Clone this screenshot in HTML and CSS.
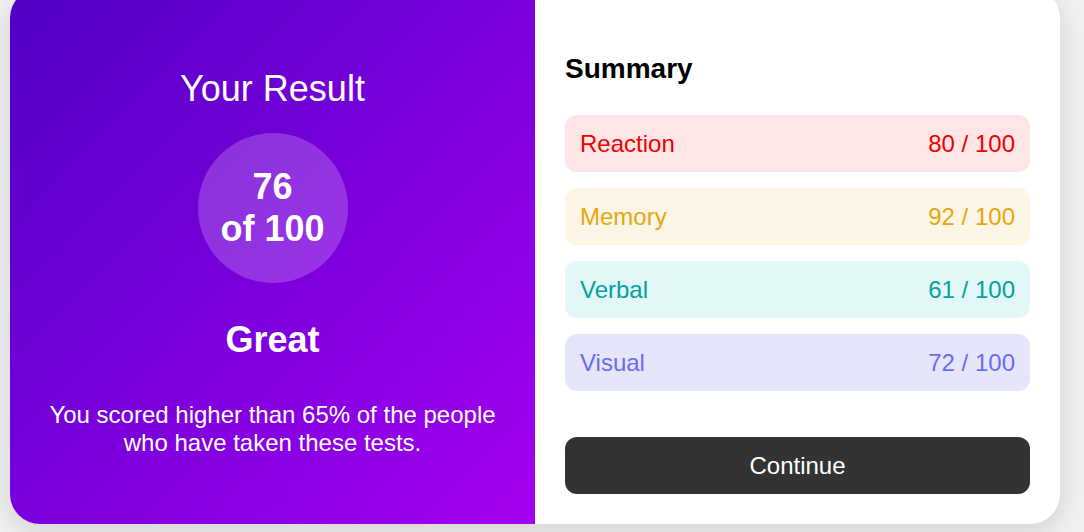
FILE: index.html
```html
<!DOCTYPE html>
<html lang="en">
<head>
<meta charset="utf-8">
<title>Results summary</title>
<link rel="stylesheet" href="styles.css">
</head>
<body>
<div class="page">
  <main class="card">
    <section class="result">
      <h1 class="result-title">Your Result</h1>
      <div class="score">
        <span>76</span>
        <span>of 100</span>
      </div>
      <p class="rating">Great</p>
      <p class="desc">You scored higher than 65% of the people who have taken these tests.</p>
    </section>
    <section class="summary">
      <h2 class="summary-title">Summary</h2>
      <ul class="rows">
        <li class="row reaction"><span>Reaction</span><span>80 / 100</span></li>
        <li class="row memory"><span>Memory</span><span>92 / 100</span></li>
        <li class="row verbal"><span>Verbal</span><span>61 / 100</span></li>
        <li class="row visual"><span>Visual</span><span>72 / 100</span></li>
      </ul>
      <button class="continue">Continue</button>
    </section>
  </main>
</div>
</body>
</html>
```
FILE: styles.css
```css
* { box-sizing: border-box; }
html, body { margin: 0; padding: 0; }
body {
  background: #f0f0f0;
  font-family: "Liberation Sans", Arial, sans-serif;
  overflow: hidden;
  height: 532px;
}
.page {
  padding-left: 10px;
}
.card {
  margin-top: -12px;
  width: 1050px;
  height: 536px;
  display: flex;
  border-radius: 30px;
  overflow: hidden;
  background: #fff;
  box-shadow: 0 8px 28px rgba(0, 0, 0, 0.12);
}
.result {
  width: 525px;
  flex: none;
  background: linear-gradient(to bottom right, #5000c4, #7a00dc 50%, #a400f0);
  color: #fff;
  display: flex;
  flex-direction: column;
  align-items: center;
  padding-top: 81px;
  text-align: center;
}
.result-title {
  margin: 0;
  font-size: 36px;
  font-weight: 400;
  line-height: 40px;
}
.score {
  margin-top: 24px;
  width: 150px;
  height: 150px;
  border-radius: 50%;
  background: rgba(255, 255, 255, 0.2);
  display: flex;
  flex-direction: column;
  align-items: center;
  justify-content: center;
  font-size: 36px;
  font-weight: 700;
  line-height: 42px;
}
.rating {
  margin: 36px 0 0;
  font-size: 36px;
  font-weight: 700;
  line-height: 41px;
}
.desc {
  margin: 41px 0 0;
  font-size: 24px;
  line-height: 28px;
  width: 460px;
}
.summary {
  flex: 1;
  padding: 65px 30px 30px;
  display: flex;
  flex-direction: column;
}
.summary-title {
  margin: 0;
  font-size: 28px;
  font-weight: 700;
  line-height: 32px;
  color: #000;
}
.rows {
  list-style: none;
  margin: 30px 0 0;
  padding: 0;
  display: flex;
  flex-direction: column;
  gap: 16px;
}
.row {
  height: 57px;
  border-radius: 12px;
  padding: 0 15px;
  display: flex;
  align-items: center;
  justify-content: space-between;
  font-size: 24px;
}
.reaction { background: #ffe5e5; color: #f00000; }
.memory { background: #fdf5e6; color: #e6a710; }
.verbal { background: #e3f7f6; color: #00a3a0; }
.visual { background: #e6e6fb; color: #6b6bf3; }
.continue {
  margin-top: 46px;
  height: 57px;
  border: none;
  border-radius: 12px;
  background: #333;
  color: #fff;
  font-family: inherit;
  font-size: 24px;
  cursor: pointer;
}
```
